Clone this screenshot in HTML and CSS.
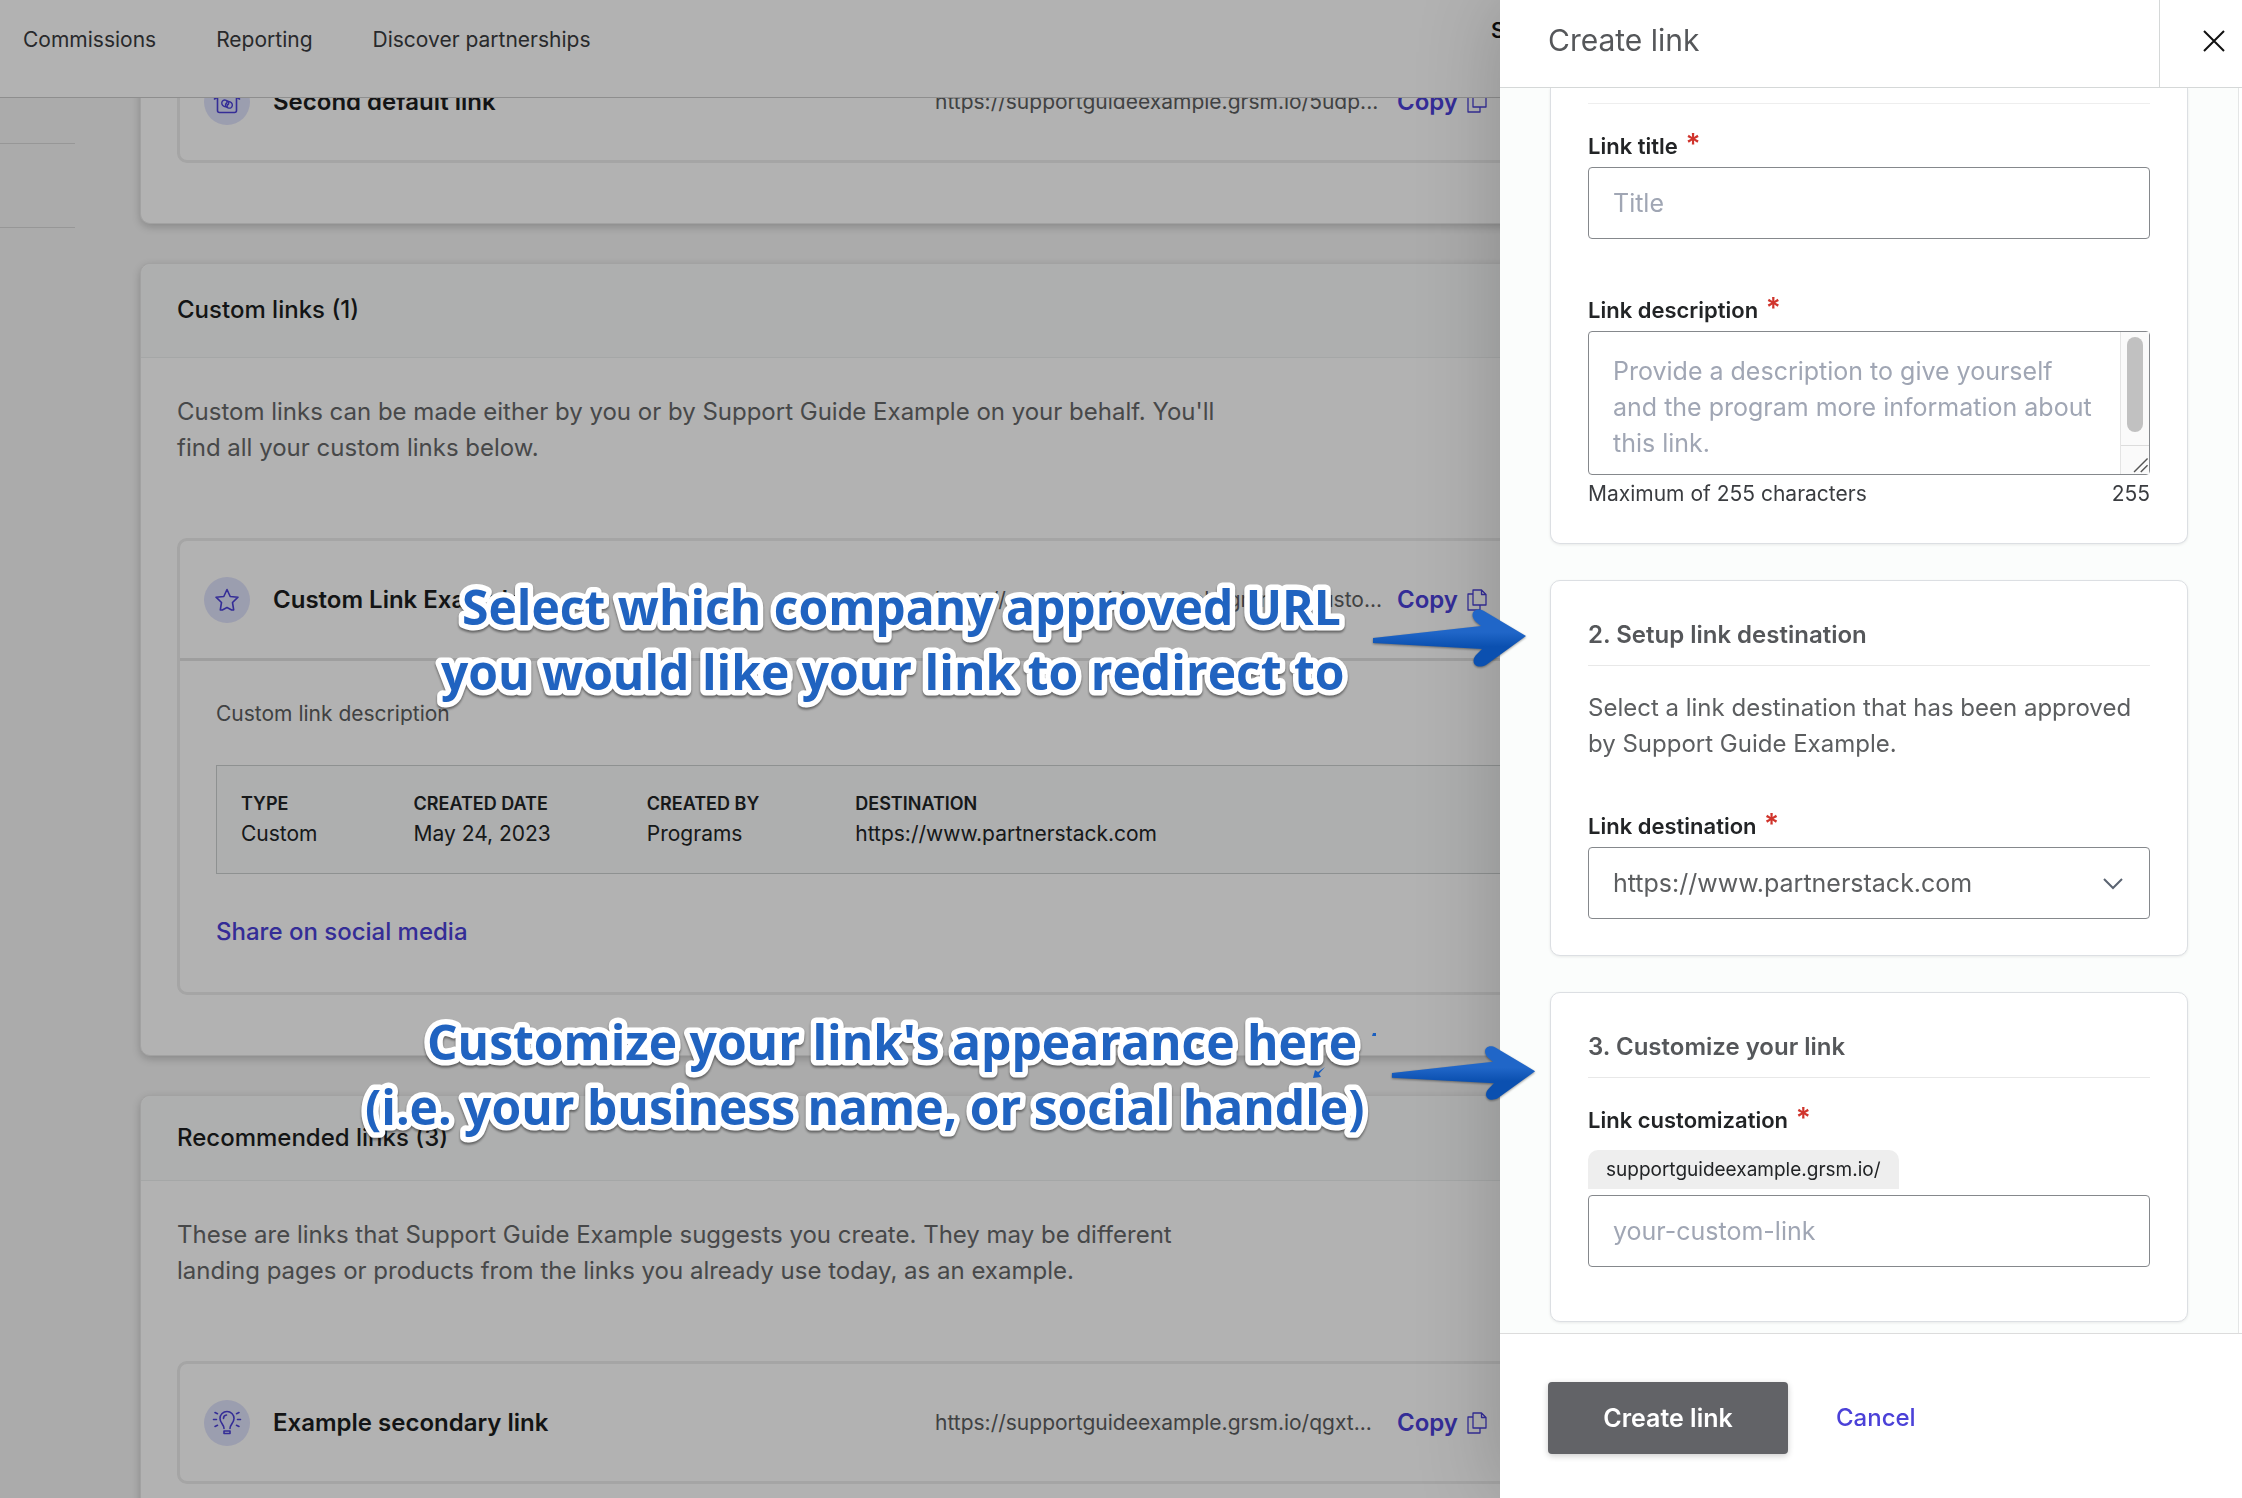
FILE: index.html
```html
<!DOCTYPE html>
<html lang="en">
<head>
<meta charset="utf-8">
<meta name="viewport" content="width=device-width, initial-scale=1">
<title>Create link</title>
<link rel="stylesheet" href="styles.css">
</head>
<body>
<svg class="defs" aria-hidden="true">
  <symbol id="icon-copy" viewBox="0 0 20 22">
    <path d="M6 1h8.500l4.500 4.500V16H6zM14.500 1v4.500H19M6 5H1v16h12v-5" fill="none" stroke="currentColor" stroke-width="1.300" stroke-linejoin="round"/>
  </symbol>
  <symbol id="arrow" viewBox="0 0 156 62">
    <path d="M1 31 109 19 104 15C96 7 103-1 112 4L154 29 114 58C104 63 97 55 105 47L110 42 1 36z" fill="url(#arrow-fill)"/>
  </symbol>
  <linearGradient id="arrow-fill" x1="0" y1="0" x2="0" y2="1">
    <stop offset=".4" stop-color="#2066c8"/>
    <stop offset=".65" stop-color="#0b50b0"/>
  </linearGradient>
</svg>

<header class="topbar">
  <nav class="topnav">
    <a href="#">Commissions</a>
    <a href="#">Reporting</a>
    <a href="#">Discover partnerships</a>
  </nav>
  <strong class="account">S</strong>
</header>

<div class="page">
  <aside class="sidebar"><hr><hr></aside>
  <main class="content">
    <section class="card card-continued">
      <div class="link-box">
        <div class="link-row">
          <span class="badge"><svg width="28" height="28" viewBox="0 0 28 28"><path d="M1.500 11 14 2l12.500 9M4.500 10v12.500a2 2 0 0 0 2 2h15a2 2 0 0 0 2-2V10"/><path d="M14.500 18.200c-1.500.8-3.500.6-4.700-.6-1.600-1.600-1.300-4.200.5-5.200 1.600-.9 4.500.2 5.200 1.700.6 1.400 0 2.800-1.200 2.700M13.700 14c1.600-.8 3.500-.5 4.700.8 1.500 1.600 1.200 4-.6 5-1.600.8-4.300-.2-5-1.700-.6-1.300-.1-2.800 1-2.800" stroke-width="1.400"/></svg></span>
          <h3 class="link-name">Second default link</h3>
          <span class="link-url">https://supportguideexample.grsm.io/5udp...</span>
          <button class="copy" type="button">Copy <svg width="20" height="22"><use href="#icon-copy"/></svg></button>
        </div>
      </div>
    </section>

    <section class="card">
      <h2 class="card-head card-head-tall">Custom links (1)</h2>
      <div class="card-body">
        <p class="intro">Custom links can be made either by you or by Support Guide Example on your behalf. You'll find all your custom links below.</p>
        <div class="link-box">
          <div class="link-row">
            <span class="badge"><svg width="28" height="28" viewBox="0 0 28 28"><path d="m14 3.500 3.200 7 7.800.7-5.500 5.300 1.200 7.500h-2L14 21.500 9.300 24h-2l1.200-7.500L3 11.200l7.800-.7z"/></svg></span>
            <h3 class="link-name">Custom Link Example</h3>
            <span class="link-url">https://supportguideexample.grsm.io/custo...</span>
            <button class="copy" type="button">Copy <svg width="20" height="22"><use href="#icon-copy"/></svg></button>
          </div>
          <div class="link-details">
            <p class="link-note">Custom link description</p>
            <div class="facts">
              <table>
                <thead><tr><th>TYPE</th><th>CREATED DATE</th><th>CREATED BY</th><th>DESTINATION</th></tr></thead>
                <tbody><tr><td>Custom</td><td>May 24, 2023</td><td>Programs</td><td>https://www.partnerstack.com</td></tr></tbody>
              </table>
            </div>
            <a class="share" href="#">Share on social media</a>
          </div>
        </div>
      </div>
    </section>

    <section class="card">
      <h2 class="card-head">Recommended links (3)</h2>
      <div class="card-body">
        <p class="intro">These are links that Support Guide Example suggests you create. They may be different landing pages or products from the links you already use today, as an example.</p>
        <div class="link-box">
          <div class="link-row">
            <span class="badge"><svg width="28" height="28" viewBox="0 0 28 28"><path d="M11 19.500c0-4-4-5.500-4-10a7 7 0 0 1 14 0c0 4.500-4 6-4 10M11 22h6v2.500h-6zM10.500 9.500a3.500 3.500 0 0 1 3-3.500M2 3.500l2.500 1.200M.5 10.500h3M2 17.500l2.500-1.200M26 3.500l-2.500 1.200M27.500 10.500h-3M26 17.500l-2.500-1.200"/></svg></span>
            <h3 class="link-name">Example secondary link</h3>
            <span class="link-url">https://supportguideexample.grsm.io/qgxt...</span>
            <button class="copy" type="button">Copy <svg width="20" height="22"><use href="#icon-copy"/></svg></button>
          </div>
        </div>
      </div>
    </section>
  </main>
</div>

<div class="scrim"></div>

<form class="drawer">
  <header class="drawer-head">
    <h1>Create link</h1>
    <button class="close" type="button" aria-label="Close"><svg width="22" height="22" viewBox="0 0 22 22"><path d="M1 1l20 20M21 1 1 21" stroke="#111" stroke-width="2"/></svg></button>
  </header>

  <div class="drawer-body">
    <section class="step step-continued">
      <div class="field field-spaced">
        <label for="title">Link title <span class="req">*</span></label>
        <input id="title" type="text" placeholder="Title">
      </div>
      <div class="field">
        <label for="desc">Link description <span class="req">*</span></label>
        <div class="control">
          <textarea id="desc" placeholder="Provide a description to give yourself and the program more information about this link."></textarea>
          <div class="scroller" aria-hidden="true">
            <i class="thumb"></i>
            <svg class="grip" width="28" height="29" viewBox="0 0 28 29"><path d="M13 27 27 13M20 27l7-7" stroke="#555" stroke-width="1.500"/></svg>
          </div>
        </div>
        <div class="hint"><span>Maximum of 255 characters</span><span>255</span></div>
      </div>
    </section>

    <section class="step">
      <h2>2. Setup link destination</h2>
      <p>Select a link destination that has been approved by Support Guide Example.</p>
      <div class="field">
        <label for="dest">Link destination <span class="req">*</span></label>
        <div class="control">
          <select id="dest"><option>https://www.partnerstack.com</option></select>
          <svg class="chevron" width="20" height="12" viewBox="0 0 20 12"><path d="m1 1 9 9 9-9" fill="none" stroke="#5b6472" stroke-width="2"/></svg>
        </div>
      </div>
    </section>

    <section class="step step-last">
      <h2>3. Customize your link</h2>
      <div class="field">
        <label for="slug">Link customization <span class="req">*</span></label>
        <span class="prefix">supportguideexample.grsm.io/</span>
        <input id="slug" type="text" placeholder="your-custom-link">
      </div>
    </section>
  </div>

  <footer class="drawer-foot">
    <button class="primary" type="submit">Create link</button>
    <button class="cancel" type="button">Cancel</button>
  </footer>
</form>

<div class="callouts">
  <svg class="callout callout-a" width="960" height="160">
    <text x="42" y="61">Select which company approved URL</text>
    <text x="21" y="126">you would like your link to redirect to</text>
  </svg>
  <svg class="callout callout-b" width="1060" height="160">
    <text x="85" y="61">Customize your link's appearance here</text>
    <text x="23" y="126">(i.e. your business name, or social handle)</text>
  </svg>
  <svg class="arrow arrow-a" width="156" height="62"><use href="#arrow"/></svg>
  <svg class="arrow arrow-b" width="146" height="60"><use href="#arrow"/></svg>
  <svg class="speck" width="64" height="48" viewBox="0 0 64 48"><path d="M0 45 2 37l3 2 7-5-6 7 2 3zM60 0h3v3h-4z" fill="#1a5fc0"/></svg>
</div>
</body>
</html>
```

FILE: styles.css
```css
* { box-sizing: border-box; }

html, body { height: 100%; }

body {
  margin: 0;
  overflow: hidden;
  background: #f5f5f5;
  color: #222426;
  font: 24px/36px Inter, "Liberation Sans", sans-serif;
}

h1, h2, h3, p { margin: 0; font-weight: 400; }
h2, h3 { font-size: 24px; }
button, input, textarea, select { font: inherit; }
button { padding: 0; border: 0; background: none; }
a { text-decoration: none; }
.defs { position: absolute; width: 0; height: 0; }

/* Top navigation */
.topbar {
  position: fixed;
  inset: 0 0 auto 0;
  z-index: 1;
  display: flex;
  height: 98px;
  padding: 0 23px;
  border-bottom: 1px solid #ccc;
  background: #fff;
}
.topnav { display: flex; gap: 60px; padding-top: 24px; font-size: 21px; line-height: 32px; }
.topnav a { color: #3a3c40; }
.account { width: 728px; margin-left: auto; padding-top: 15px; font-size: 21px; line-height: 32px; font-weight: 600; color: #111; }

/* Page behind the drawer */
.page { display: flex; }
.sidebar { flex: none; width: 75px; padding-top: 143px; }
.sidebar hr { height: 1px; margin: 0 0 83px; border: 0; background: #d8d8d8; }
.content { display: flex; flex: 1; flex-direction: column; gap: 39px; padding: 0 66px 0 65px; }
.card {
  border: 1px solid #e8e8e8;
  border-radius: 10px;
  background: #fff;
  box-shadow: 0 3px 8px rgba(0, 0, 0, .2);
}
.card-continued { padding: 40px 36px 60px; border-top: 0; border-radius: 0 0 10px 10px; }
.card-head {
  padding: 24px 36px;
  border-bottom: 1px solid #edf0f0;
  border-radius: 10px 10px 0 0;
  background: #f9fbfb;
  font-weight: 500;
  color: #1c1e20;
}
.card-head-tall { padding: 28px 36px 29px; }
.card-body { padding: 36px 36px 60px; }
.intro { max-width: 1060px; margin-bottom: 72px; color: #666869; }

.link-box { border: 3px solid #ececec; border-radius: 10px; }
.link-row {
  display: grid;
  grid-template-columns: 46px 639px 439px auto;
  column-gap: 23px;
  align-items: center;
  height: 117px;
  padding-left: 24px;
}
.badge { display: grid; place-items: center; width: 46px; height: 46px; border-radius: 50%; background: #dfe2fb; }
.badge svg { fill: none; stroke: #4b41d8; stroke-width: 1.6; stroke-linejoin: round; stroke-linecap: round; overflow: visible; }
.link-name { font-weight: 600; color: #1c1e20; }
.link-url { font-size: 21px; color: #5c5e60; white-space: nowrap; }
.copy { display: flex; align-items: center; gap: 9px; font-weight: 600; color: #4b41d8; }

.link-details { padding: 38px 36px 42px; border-top: 3px solid #e2e2e2; }
.link-note { margin-bottom: 36px; font-size: 21px; line-height: 30px; color: #5c5e60; }
.facts { margin-bottom: 40px; padding: 23px 24px 24px; border: 1px solid #ccd0d0; background: #f9fbfb; }
.facts table { border-collapse: collapse; text-align: left; }
.facts th { padding: 0 96px 0 0; font-size: 18px; line-height: 30px; font-weight: 600; }
.facts td { padding: 0 96px 0 0; font-size: 21px; line-height: 30px; }
.share { display: block; color: #4b41d8; font-weight: 500; }

.scrim { position: fixed; inset: 0; z-index: 2; background: rgba(0, 0, 0, .3); }

/* Drawer */
.drawer {
  position: fixed;
  inset: 0 0 0 auto;
  z-index: 3;
  display: flex;
  flex-direction: column;
  width: 742px;
  background: #fff;
  box-shadow: 0 0 80px rgba(0, 0, 0, .2);
}
.drawer-head { display: flex; flex: none; justify-content: space-between; border-bottom: 1px solid #d5d8d8; }
.drawer-head h1 { padding: 20px 48px 27px; font-size: 30px; line-height: 40px; color: #55575a; }
.close { width: 83px; padding: 0 0 5px 26px; border-left: 1px solid #d5d8d8; }
.close svg { display: block; margin: auto; }

.drawer-body {
  display: flex;
  flex: 1;
  flex-direction: column;
  gap: 36px;
  min-height: 0;
  margin-right: 3px;
  padding: 0 50px;
  overflow: hidden;
  border-right: 1px solid #e4e6e6;
  background: #fbfdfc;
}
.step {
  flex: none;
  padding: 36px 37px;
  border: 1px solid #dcdfe3;
  border-radius: 10px;
  background: #fff;
  box-shadow: 0 1px 3px rgba(0, 0, 0, .08);
}
.step-continued { padding-top: 15px; padding-bottom: 34px; border-top: 0; border-radius: 0 0 10px 10px; }
.step-continued::before { content: ""; display: block; height: 1px; margin-bottom: 26px; background: #eee; }
.step-last { padding-bottom: 54px; }
.step h2 { margin-bottom: 24px; padding-bottom: 12px; border-bottom: 1px solid #e8e8e8; font-weight: 600; color: #55575a; }
.step-last h2 { margin-bottom: 26px; }
.step p { margin-bottom: 48px; color: #5c5e60; }

.field { display: flex; flex-direction: column; }
.field-spaced { margin-bottom: 55px; }
.field label { margin-bottom: 5px; font-size: 22px; line-height: 32px; font-weight: 600; }
.req { margin-left: 2px; color: #d0342c; font-size: 28px; line-height: 0; }
.control { position: relative; display: flex; }
.field input, .field textarea, .field select {
  width: 100%;
  height: 72px;
  padding: 0 24px;
  border: 1px solid #85888c;
  border-radius: 4px;
  background: #fff;
  color: #5c5e60;
  font-size: 25px;
}
.field textarea { height: 144px; padding: 21px 50px 0 24px; overflow: hidden; resize: none; }
.field select { appearance: none; }
.field ::placeholder { color: #a0a6b4; opacity: 1; }
.chevron { position: absolute; top: 31px; right: 27px; }
.scroller { position: absolute; inset: 1px 1px 1px auto; display: flex; flex-direction: column; justify-content: space-between; width: 29px; border-left: 1px solid #e4e4e4; background: #fafafa; }
.thumb { width: 16px; height: 95px; margin: 5px 6px; border-radius: 8px; background: #c1c1c1; }
.grip { border-top: 1px solid #dcdcdc; }
.hint { display: flex; justify-content: space-between; margin-top: 4px; font-size: 21px; line-height: 30px; color: #3a3c40; }
.prefix { align-self: flex-start; margin: 9px 0 6px; padding: 0 18px; border-radius: 10px 10px 0 0; background: #eee; font-size: 19px; line-height: 39px; }

.drawer-foot { display: flex; flex: none; gap: 48px; padding: 48px 48px 44px; border-top: 1px solid #dcdcdc; }
.primary { width: 240px; height: 72px; border-radius: 4px; background: #626367; color: #fff; font-size: 25px; font-weight: 600; box-shadow: 0 2px 6px rgba(0, 0, 0, .2); }
.cancel { color: #4b41d8; font-weight: 500; }

/* Tutorial callouts floating over the screen */
.callouts { position: fixed; inset: 0; z-index: 4; pointer-events: none; }
.callout {
  position: absolute;
  font: 700 48px "Open Sans", "Noto Sans", sans-serif;
  fill: #2063c0;
  stroke: #fff;
  stroke-width: 11px;
  stroke-linejoin: round;
  paint-order: stroke fill;
  filter: drop-shadow(0 2px 1px rgba(0, 0, 0, .45));
}
.callout-a { left: 420px; top: 564px; }
.callout-b { left: 342px; top: 999px; }
.arrow { position: absolute; filter: drop-shadow(0 1px 1px rgba(0, 0, 0, .4)); }
.arrow-a { left: 1372px; top: 607px; }
.arrow-b { left: 1391px; top: 1043px; }
.speck { position: absolute; left: 1313px; top: 1033px; }
```
